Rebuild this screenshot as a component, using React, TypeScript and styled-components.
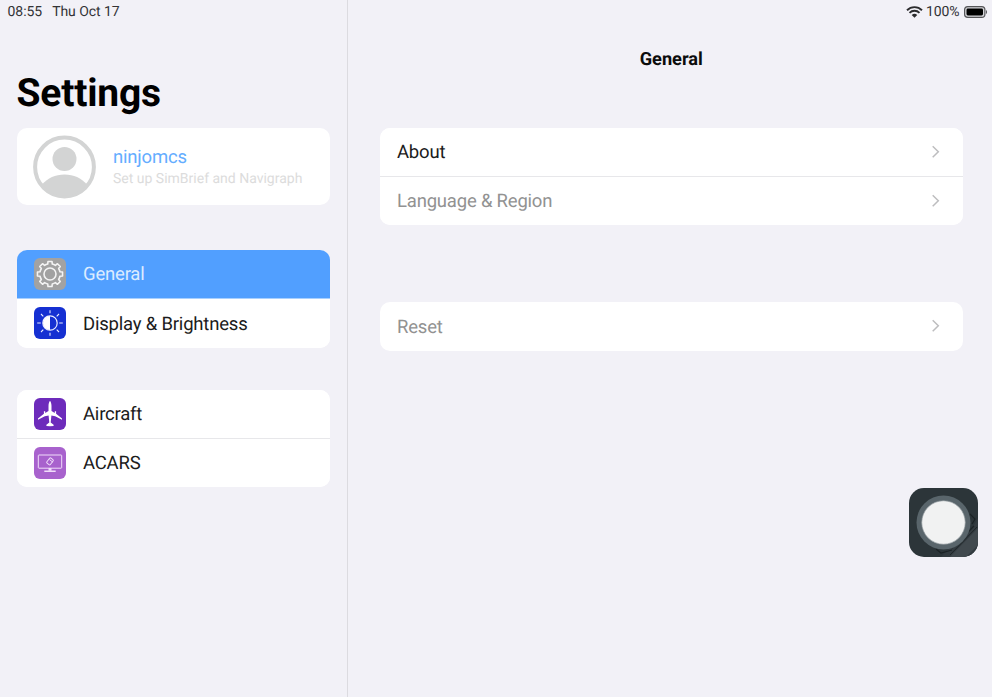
import React from "react";
import styled, { createGlobalStyle } from "styled-components";

const GlobalStyle = createGlobalStyle`
  * { box-sizing: border-box; }
  body { margin: 0; background: #f2f1f7; }
`;

const Screen = styled.div`
  position: relative;
  display: grid;
  grid-template-columns: 348px 1fr;
  width: 992px;
  height: 697px;
  overflow: hidden;
  background: #f2f1f7;
  color: #1c1c1c;
  font-family: Roboto, "Liberation Sans", sans-serif;
  text-rendering: geometricPrecision;
`;

const Sidebar = styled.aside`
  display: flex;
  flex-direction: column;
  padding: 0 17.5px 0 16.5px;
  border-right: 1px solid #dcdbe0;
`;

const Detail = styled.main`
  display: flex;
  flex-direction: column;
  padding: 0 29px 0 31.5px;
`;

const StatusLeft = styled.div`
  display: flex;
  gap: 10px;
  height: 24px;
  margin-left: -9px;
  font-size: 14px;
  line-height: 25px;
  letter-spacing: -0.05px;
  color: #333336;
`;

const StatusRight = styled.div`
  display: flex;
  align-items: center;
  justify-content: flex-end;
  height: 24px;
  margin-right: -24.5px;
  font-size: 14px;
  line-height: 25px;
  letter-spacing: -0.1px;
  color: #333336;
  svg { display: block; }
`;

const Percent = styled.span`
  margin: 0 4px 0 3px;
`;

const Title = styled.h1`
  height: 104px;
  margin: 0;
  padding-top: 45px;
  font-size: 39px;
  font-weight: 700;
  line-height: 48px;
  letter-spacing: -0.2px;
  color: #000;
`;

const PaneTitle = styled.h2`
  height: 103.5px;
  margin: 0;
  padding-top: 24px;
  font-size: 18.2px;
  font-weight: 700;
  line-height: 24px;
  text-align: center;
  color: #0c0c0c;
`;

const Card = styled.section<{ $gap?: number }>`
  flex: none;
  margin-top: ${(p) => p.$gap ?? 0}px;
  border-radius: 10px;
  overflow: hidden;
  background: #fff;
`;

const Profile = styled(Card)`
  display: flex;
  align-items: center;
  gap: 16.5px;
  height: 77px;
  padding: 2px 0 0 16px;
  svg { display: block; margin-top: -2px; }
`;

const UserName = styled.div`
  font-size: 18.5px;
  line-height: 22px;
  letter-spacing: -0.2px;
  color: #64adff;
`;

const UserHint = styled.div`
  font-size: 14px;
  line-height: 21px;
  padding-top: 1px;
  margin-bottom: -1px;
  color: #dcdcdc;
`;

const Row = styled.div<{ $active?: boolean; $muted?: boolean; $divided?: boolean }>`
  display: flex;
  align-items: center;
  gap: 17.5px;
  height: ${(p) => (p.$divided ? 49 : 48.5)}px;
  padding: 0 23px 0 17.5px;
  font-size: 18.5px;
  letter-spacing: -0.2px;
  border-bottom: ${(p) => (p.$divided ? `1px solid ${p.$active ? "#a8d0ff" : "#e7e7ea"}` : "none")};
  background: ${(p) => (p.$active ? "#519fff" : "#fff")};
  color: ${(p) => (p.$active ? "#dcecff" : p.$muted ? "#929292" : "#1c1c1c")};
`;

const Label = styled.span<{ $nudge?: boolean }>`
  flex: 1;
  padding-top: ${(p) => (p.$nudge ? 1.5 : 0)}px;
`;

const Tile = styled.span<{ $color: string }>`
  display: grid;
  place-items: center;
  width: 32px;
  height: 32px;
  margin-left: -0.5px;
  border-radius: 6px;
  background: ${(p) => p.$color};
  svg { display: block; }
`;

const Assist = styled.div`
  position: absolute;
  left: 909px;
  top: 488px;
  width: 69px;
  height: 69px;
  border-radius: 15px;
  overflow: hidden;
  svg { display: block; }
`;

const gearPath = (() => {
  const pts: string[] = [];
  for (let i = 0; i < 8; i++) {
    const corners: [number, number][] = [
      [-13, 10.2],
      [-9, 12.7],
      [9, 12.7],
      [13, 10.2],
    ];
    corners.forEach(([offset, r]) => {
      const a = ((i * 45 + offset) * Math.PI) / 180;
      pts.push(`${(16 + r * Math.sin(a)).toFixed(2)} ${(16 - r * Math.cos(a)).toFixed(2)}`);
    });
  }
  return pts
    .map((p, i) => (i === 0 ? `M${p}` : i % 4 === 0 ? `A10.2 10.2 0 0 1 ${p}` : `L${p}`))
    .join("") + "A10.2 10.2 0 0 1 " + pts[0] + "Z";
})();

const Gear = () => (
  <svg width="32" height="32" viewBox="0 0 32 32" fill="none" stroke="#f4f4f4" strokeWidth="1.6" strokeLinejoin="round">
    <path d={gearPath} />
    <circle cx="16" cy="16" r="6" />
  </svg>
);

const Brightness = () => (
  <svg width="32" height="32" viewBox="0 0 32 32" fill="none" stroke="#e9ecff" strokeWidth="1.2">
    <circle cx="16" cy="16" r="7.2" />
    <path d="M16 9a7 7 0 0 0 0 14Z" fill="#fff" stroke="none" />
    <path strokeWidth="1.1" d="M16 3.2v3M16 25.8v3M3.2 16h3.6M25.2 16h3.6M7 7l2.3 2.3M22.7 22.7L25 25M7 25l2.3-2.3M22.7 9.3L25 7" />
  </svg>
);

const Plane = () => (
  <svg width="32" height="32" viewBox="0 0 32 32" fill="#fff">
    <path d="M16 2.8c.9 1.2 1.5 3.200 1.5 5.200v5l3.300 1.900v-1.600h1.300v2.500l5.900 4.700v1.300l-6.800-3.500-3.800-.9-.7 7.200 2.900 2.200v1.300L16 28.300l-3.600-.2v-1.300l2.900-2.200-.7-7.200-3.800.9L4 21.800v-1.300l5.900-4.700v-2.500h1.300v1.600l3.300-1.900V8c0-2 .6-4 1.500-5.200Z" />
  </svg>
);

const Monitor = () => (
  <svg width="32" height="32" viewBox="0 0 32 32" fill="none" stroke="#f0dcfa" strokeWidth="1">
    <rect x="4.3" y="8" width="23.4" height="13.2" rx=".7" />
    <path d="M16 21v2.8" strokeWidth="3" />
    <path d="M10.3 24.3h11.4" strokeWidth="1.5" />
    <rect x="13.8" y="11.2" width="4.4" height="6.4" rx="1" transform="rotate(38 16 14.4)" />
    <path d="M15.5 12.6l3.4 2.6" />
  </svg>
);

const Avatar = () => (
  <svg width="64" height="64" viewBox="0 0 64 64" fill="#d3d4d4">
    <circle cx="31.5" cy="32" r="29.4" fill="none" stroke="#d3d4d4" strokeWidth="4" />
    <circle cx="31.5" cy="24" r="12" />
    <path d="M9 49.5C15 43 22 39.5 31.5 39.5s16.5 3.5 22.5 10A29 29 0 0 1 9 49.5Z" />
  </svg>
);

const Chevron = () => (
  <svg width="8" height="14" viewBox="0 0 8 14" fill="none" stroke="#bdbdbf" strokeWidth="1.5">
    <path d="M.7 1.200L6.300 6.700L.7 12.200" />
  </svg>
);

const Wifi = () => (
  <svg width="17" height="13" viewBox="0 0 17 13" fill="none" stroke="#2b2b2d" strokeWidth="1.9">
    <path d="M1 4.200a10.700 10.700 0 0 1 15 0M3.500 6.800a7.100 7.100 0 0 1 10 0" />
    <path d="M8.500 11.800L5.700 9a4 4 0 0 1 5.600 0Z" fill="#2b2b2d" stroke="none" />
  </svg>
);

const Battery = () => (
  <svg width="24" height="13" viewBox="0 0 24 13">
    <rect x=".6" y=".6" width="20.3" height="10.8" rx="3.2" fill="#d4d4d8" stroke="#555558" strokeWidth="1.2" />
    <rect x="2.5" y="2.5" width="16.5" height="7" rx="1.4" fill="#000" />
    <path d="M22 4c1.400.6 1.400 3.400 0 4Z" fill="#555558" />
  </svg>
);

const AssistButton = () => (
  <svg width="69" height="69" viewBox="0 0 69 69">
    <rect width="69" height="69" fill="#2c3539" />
    <path d="M69 30L62 42 43 57 32 69h37Z" fill="#333b40" />
    <path d="M69 40V57L57 69H41Z" fill="#41494e" />
    <path d="M61 26l5 5-3 5M27 61l5 4 11-3M65 38l-9 9-13 13" fill="none" stroke="#1b2225" strokeWidth="1.2" />
    <path d="M68 39L41 67" stroke="#1f2629" strokeWidth="1" />
    <circle cx="34.5" cy="34.5" r="27" fill="#59656b" />
    <circle cx="34.5" cy="34.5" r="21.8" fill="#f1f2f2" stroke="#8d9599" strokeWidth=".7" />
  </svg>
);

export default function App() {
  return (
    <>
      <GlobalStyle />
      <Screen>
        <Sidebar>
          <StatusLeft>
            <span>08:55</span>
            <span>Thu Oct 17</span>
          </StatusLeft>
          <Title>Settings</Title>
          <Profile>
            <Avatar />
            <div>
              <UserName>ninjomcs</UserName>
              <UserHint>Set up SimBrief and Navigraph</UserHint>
            </div>
          </Profile>
          <Card $gap={45}>
            <Row $active $divided>
              <Tile $color="#a2a2a2"><Gear /></Tile>
              <Label>General</Label>
            </Row>
            <Row>
              <Tile $color="#1530d2"><Brightness /></Tile>
              <Label $nudge>Display &amp; Brightness</Label>
            </Row>
          </Card>
          <Card $gap={42}>
            <Row $divided>
              <Tile $color="#6d2bbb"><Plane /></Tile>
              <Label>Aircraft</Label>
            </Row>
            <Row>
              <Tile $color="#a862cd"><Monitor /></Tile>
              <Label>ACARS</Label>
            </Row>
          </Card>
        </Sidebar>
        <Detail>
          <StatusRight>
            <Wifi />
            <Percent>100%</Percent>
            <Battery />
          </StatusRight>
          <PaneTitle>General</PaneTitle>
          <Card>
            <Row $divided>
              <Label>About</Label>
              <Chevron />
            </Row>
            <Row $muted>
              <Label>Language &amp; Region</Label>
              <Chevron />
            </Row>
          </Card>
          <Card $gap={77}>
            <Row $muted>
              <Label $nudge>Reset</Label>
              <Chevron />
            </Row>
          </Card>
        </Detail>
        <Assist>
          <AssistButton />
        </Assist>
      </Screen>
    </>
  );
}
